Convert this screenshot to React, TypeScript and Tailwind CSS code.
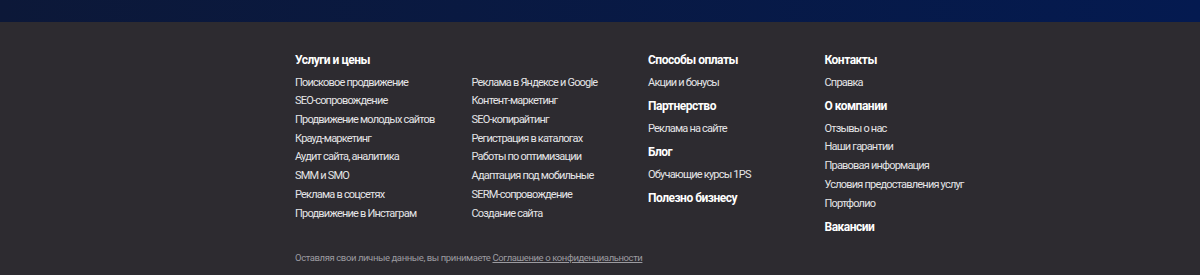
import React from 'react';

const services = [
  ['Поисковое продвижение', 'SEO-сопровождение', 'Продвижение молодых сайтов', 'Крауд-маркетинг', 'Аудит сайта, аналитика', 'SMM и SMO', 'Реклама в соцсетях', 'Продвижение в Инстаграм'],
  ['Реклама в Яндексе и Google', 'Контент-маркетинг', 'SEO-копирайтинг', 'Регистрация в каталогах', 'Работы по оптимизации', 'Адаптация под мобильные', 'SERM-сопровождение', 'Создание сайта'],
];

type Group = { title: string; links: string[] };

const col3: Group[] = [
  { title: 'Способы оплаты', links: ['Акции и бонусы'] },
  { title: 'Партнерство', links: ['Реклама на сайте'] },
  { title: 'Блог', links: ['Обучающие курсы 1PS'] },
  { title: 'Полезно бизнесу', links: [] },
];

const col4: Group[] = [
  { title: 'Контакты', links: ['Справка'] },
  { title: 'О компании', links: ['Отзывы о нас', 'Наши гарантии', 'Правовая информация', 'Условия предоставления услуг', 'Портфолио'] },
  { title: 'Вакансии', links: [] },
];

function Heading({ children }: { children: React.ReactNode }) {
  return <h4 className="text-[12px] font-bold leading-[16px] tracking-[-0.5px] text-white">{children}</h4>;
}

function LinkList({ links }: { links: string[] }) {
  return (
    <ul className="mt-[5.6px]">
      {links.map((l) => (
        <li key={l} className="text-[11px] leading-[18.7px] tracking-[-0.8px] text-[#e4e4e6]">
          <a href="#">{l}</a>
        </li>
      ))}
    </ul>
  );
}

function Groups({ groups }: { groups: Group[] }) {
  return (
    <div className="flex flex-col gap-[5.8px]">
      {groups.map((g) => (
        <div key={g.title}>
          <Heading>{g.title}</Heading>
          {g.links.length > 0 && <LinkList links={g.links} />}
        </div>
      ))}
    </div>
  );
}

export default function App() {
  return (
    <div className="h-[275px] w-[1200px] overflow-hidden bg-[#2d2b30] font-['Roboto',sans-serif]">
      <div className="h-[22px] bg-gradient-to-r from-[#0c1838] to-[#041a50]" />

      {/* footer columns */}
      <div className="ml-[295px] pt-[30px]">
        <div className="flex">
          <div className="w-[353px]">
            <Heading>Услуги и цены</Heading>
            <div className="flex">
              {services.map((col, i) => (
                <div key={i} className="w-[176.5px]">
                  <LinkList links={col} />
                </div>
              ))}
            </div>
          </div>
          <div className="w-[176.5px]">
            <Groups groups={col3} />
          </div>
          <div className="w-[176.5px]">
            <Groups groups={col4} />
          </div>
        </div>

        <p className="mt-[16px] text-[9.5px] leading-[14px] tracking-[-0.4px] text-[#9c9ba0]">
          Оставляя свои личные данные, вы принимаете{' '}
          <a href="#" className="underline">Соглашение о конфиденциальности</a>
        </p>
      </div>
    </div>
  );
}
